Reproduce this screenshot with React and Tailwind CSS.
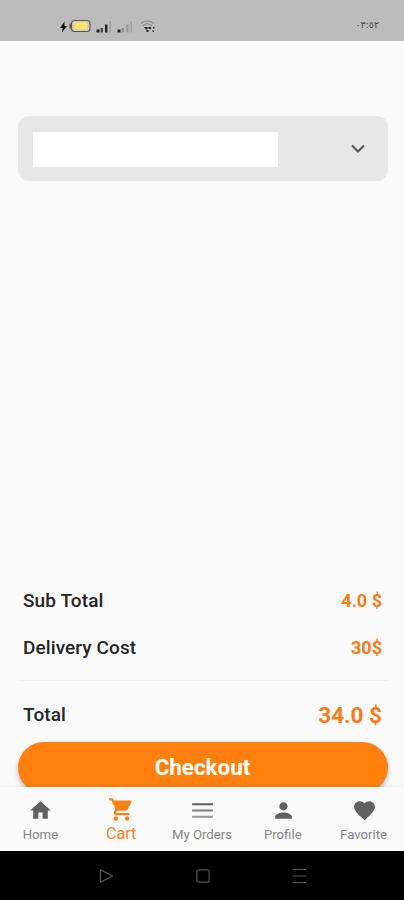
import React from "react";

const navItems = [
  { label: "Home", path: "M10 20v-6h4v6h5v-8h3L12 3 2 12h3v8z" },
  {
    label: "Cart",
    active: true,
    path: "M7 18c-1.1 0-1.99.9-1.99 2S5.9 22 7 22s2-.9 2-2-.9-2-2-2zM1 2v2h2l3.6 7.59-1.35 2.45c-.16.28-.25.61-.25.96 0 1.1.9 2 2 2h12v-2H7.42c-.14 0-.25-.11-.25-.25l.03-.12.9-1.63h7.45c.75 0 1.41-.41 1.75-1.03l3.58-6.49c.08-.14.12-.31.12-.48 0-.55-.45-1-1-1H5.21l-.94-2H1zm16 16c-1.1 0-1.99.9-1.99 2s.89 2 1.99 2 2-.9 2-2-.9-2-2-2z",
  },
  { label: "My Orders" },
  {
    label: "Profile",
    path: "M12 12c2.21 0 4-1.79 4-4s-1.79-4-4-4-4 1.79-4 4 1.79 4 4 4zm0 2c-2.67 0-8 1.34-8 4v2h16v-2c0-2.66-5.33-4-8-4z",
  },
  {
    label: "Favorite",
    path: "M12 21.35l-1.45-1.32C5.4 15.36 2 12.28 2 8.5 2 5.42 4.42 3 7.5 3c1.74 0 3.41.81 4.5 2.09C13.09 3.81 14.76 3 16.5 3 19.58 3 22 5.42 22 8.5c0 3.78-3.4 6.86-8.55 11.54L12 21.35z",
  },
];

function Signal({ strong }) {
  return (
    <svg width="16" height="13" viewBox="0 0 16 13">
      <rect x="0.5" y="9.5" width="3" height="3" fill="#222" />
      <rect x="4.7" y="8" width="2.2" height="4.5" fill={strong ? "#444" : "#888"} />
      <rect x="9" y="4.5" width="2.4" height="8" fill={strong ? "#222" : "#9a9a9a"} />
      <rect x="13.5" y="1" width="1.5" height="11.5" fill="#a0a0a0" />
    </svg>
  );
}

function StatusBar() {
  return (
    <header className="flex h-[41px] shrink-0 items-start justify-between bg-[#bcbcbc] pl-[59px] pr-[25px] pt-[19px]">
      <div className="flex items-center">
        <svg width="9" height="13" viewBox="0 0 9 13" fill="#151515">
          <path d="M5.5 1.5 1 8h2.8L3 12.5 8 6H5.5z" />
        </svg>
        <svg width="23" height="14" viewBox="0 0 23 14">
          <rect x="3.5" y="1.5" width="18.5" height="11" rx="3" fill="#d6cdae" stroke="#585858" strokeWidth="1.2" />
          <rect x="6.5" y="3.3" width="12.5" height="7.4" fill="#ffe174" />
          <rect x="1.5" y="4.5" width="1.8" height="5" rx="0.6" fill="#555" />
        </svg>
        <div className="ml-[5px] flex gap-[5px]">
          <Signal strong />
          <Signal />
        </div>
        <svg className="ml-[7px]" width="16" height="14" viewBox="0 0 16 14" fill="none">
          <path d="M1 4.5Q7.5-1 14 4.5M3 6.8Q7.5 2.7 12 6.8" stroke="#898989" strokeWidth="1.1" />
          <path d="M4 8h3.5v2.5H6zM8.5 8H11v2H8.5zM6.5 11h2v2h-2zM13 8h1.5v1.5H13zM12.5 11.5H14V13h-1.5z" fill="#222" />
        </svg>
      </div>
      <span className="font-['DejaVu_Sans',sans-serif] text-[9.5px] leading-[12px] text-[#444]" dir="ltr">٠٣:٥٢</span>
    </header>
  );
}

function Row({ label, value, className = "" }) {
  return (
    <div className="flex items-center justify-between pl-[5px] pr-1.5">
      <span className="pt-px text-[19px] font-medium tracking-[0.1px] text-[#252525]">{label}</span>
      <span className={`font-bold text-[#f77b17] ${className}`}>{value}</span>
    </div>
  );
}

export default function App() {
  return (
    <div className="flex h-[900px] w-[404px] flex-col overflow-hidden bg-[#fafafa] font-[Roboto,sans-serif]">
      <StatusBar />
      <main className="flex min-h-0 flex-1 flex-col overflow-hidden pl-[18px] pr-4 pt-[75px]">
        <div className="flex h-[65px] shrink-0 items-center justify-between rounded-[11px] bg-[#e7e7e7] pl-[15px] pr-[23px]">
          <div className="mt-[2px] h-[35px] w-[245px] bg-white" />
          <svg width="14" height="10" viewBox="0 0 14 10" fill="none" stroke="#555" strokeWidth="2">
            <path d="m1 1.5 6 6 6-6" />
          </svg>
        </div>
        <section className="mt-[396px] shrink-0">
          <div className="flex h-[47px] flex-col justify-center">
            <Row label="Sub Total" value="4.0 $" className="text-[18px]" />
          </div>
          <div className="flex h-[47px] flex-col justify-center">
            <Row label="Delivery Cost" value="30$" className="text-[18px]" />
          </div>
          <hr className="mt-[9px] border-[#f0f0f0]" />
          <div className="flex h-[61px] flex-col justify-end pb-[10px]">
            <Row label="Total" value="34.0 $" className="text-[22.5px] leading-[34px]" />
          </div>
          <button className="h-[51px] w-full rounded-full bg-[#ff800d] pr-px text-[22.4px] font-bold text-white shadow-[0_3px_5px_rgba(0,0,0,0.25)]">
            Checkout
          </button>
        </section>
      </main>
      <nav className="grid h-[64px] shrink-0 grid-cols-5 bg-[#fafafa] shadow-[0_-1px_2px_rgba(0,0,0,0.08)]">
        {navItems.map(({ label, path, active }) => (
          <div key={label} className={`flex flex-col items-center ${active ? "text-[#fb8015]" : "text-[#606060]"}`}>
            <svg className={active ? "mt-[9px]" : "ml-px mt-[11px]"} width={active ? 27 : 25} height={active ? 27 : 25} viewBox="0 0 24 24" fill="currentColor">
              {path ? (
                <path d={path} />
              ) : (
                <>
                  <path d="M2 5h20v2H2z" />
                  <path d="M2 11h20v2H2z" opacity="0.8" />
                  <path d="M2 17h20v2H2z" opacity="0.65" />
                </>
              )}
            </svg>
            <span className={`whitespace-nowrap ${active ? "mt-px text-[16px] leading-[20px]" : "mt-[4px] text-[13.2px] leading-[16px] text-[#858585]"}`}>{label}</span>
          </div>
        ))}
      </nav>
      <footer className="flex h-[49px] shrink-0 items-center justify-center gap-[82px] bg-black pl-px">
        <svg width="15" height="16" viewBox="0 0 15 16" fill="none" stroke="#555" strokeWidth="1.2">
          <path d="M1.5 1.7v12.6L13.5 8z" strokeLinejoin="round" />
        </svg>
        <svg width="14" height="14" viewBox="0 0 14 14" fill="none" stroke="#555" strokeWidth="1.2">
          <rect x="0.8" y="0.8" width="12.4" height="12.4" rx="2" />
        </svg>
        <svg width="15" height="16" viewBox="0 0 15 16" stroke="#555" strokeWidth="1.2">
          <path d="M.5 1.5h14M.5 8h14M.5 14.5h14" />
        </svg>
      </footer>
    </div>
  );
}
